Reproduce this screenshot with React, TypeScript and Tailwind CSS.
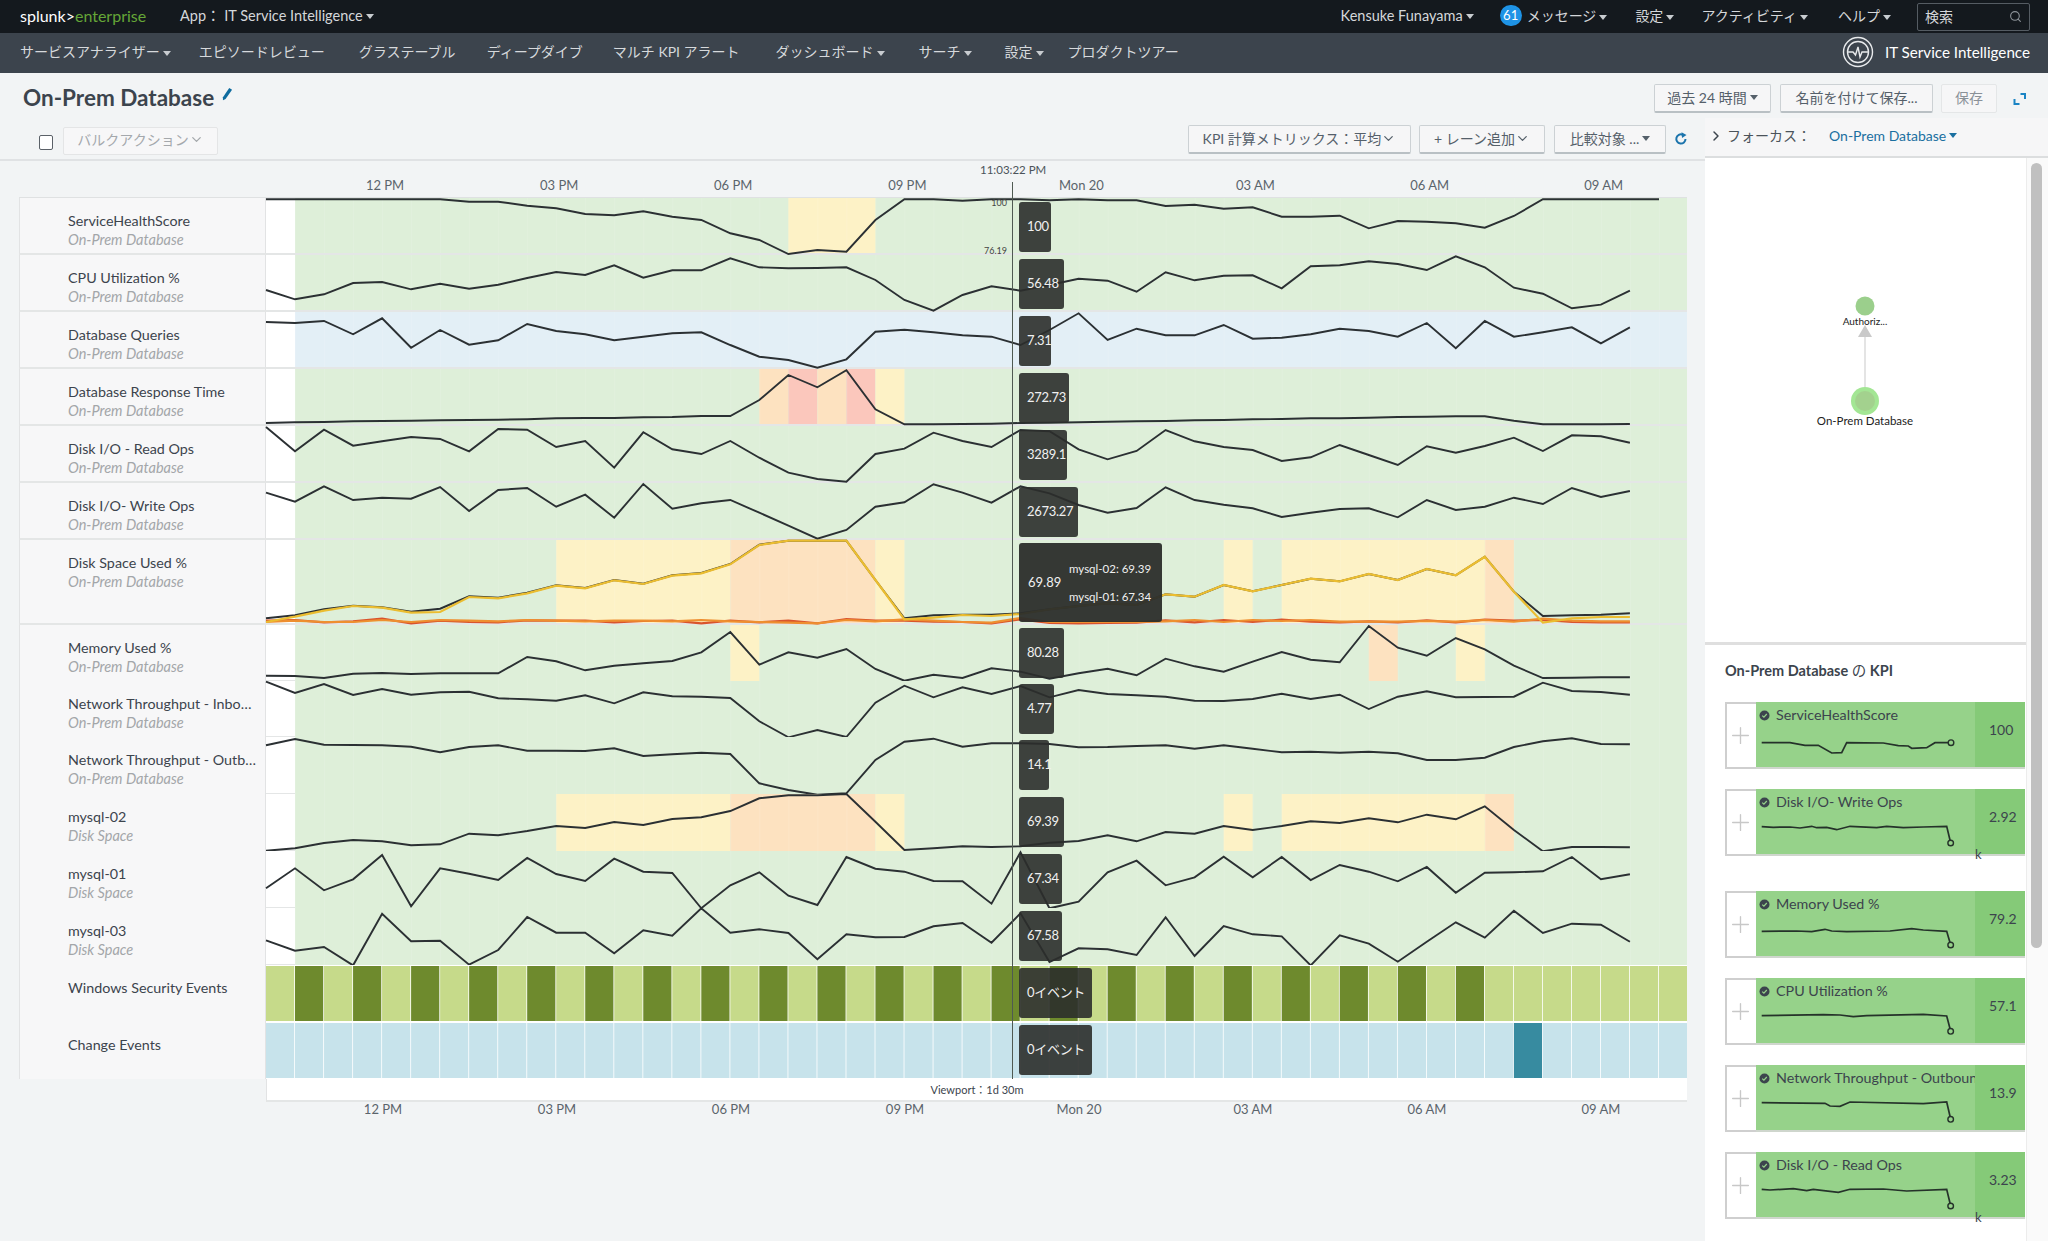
import { ChevronDown, ChevronRight, Plus, Search } from "lucide-react";

const STEP = 29.02;
const GREEN = "#deefd9";
const BLUE = "#e3eff6";
const YEL = "#fdf2c6";
const ORG = "#fde2c0";
const RED = "#fbc7bc";

type Band = [number, number, string];

interface Lane {
  name: string;
  sub: string;
  top: number;
  h: number;
  base: number;
  data: number[];
  bands: Band[];
  tip: string;
  tipW: number;
  bg?: string;
  sep?: boolean;
}

const diskBands: Band[] = [
  [10, 16, YEL],
  [16, 21, ORG],
  [21, 22, YEL],
  [33, 34, YEL],
  [35, 42, YEL],
  [42, 43, ORG],
];

const LANES: Lane[] = [
  {
    name: "ServiceHealthScore", sub: "On-Prem Database", top: 198, h: 57, base: 190, tip: "100", tipW: 32, sep: true,
    bands: [[18, 21, YEL]],
    data: [28, 28, 28, 28, 28, 28, 28, 35, 35, 47, 55, 72, 76, 64, 80, 90, 130, 150, 192, 180, 185, 90, 28, 28, 32, 28, 28, 31, 28, 31, 31, 48, 44, 56, 52, 80, 80, 77, 115, 93, 95, 100, 113, 78, 28, 28, 28, 28, 28],
  },
  {
    name: "CPU Utilization %", sub: "On-Prem Database", top: 255, h: 57, base: 190, tip: "56.48", tipW: 45, sep: true,
    bands: [],
    data: [300, 328, 313, 279, 276, 298, 281, 296, 284, 264, 246, 255, 226, 263, 241, 241, 205, 232, 235, 234, 232, 270, 330, 362, 315, 289, 302, 285, 266, 272, 305, 247, 271, 257, 256, 295, 229, 226, 214, 222, 240, 199, 232, 293, 311, 355, 344, 302],
  },
  {
    name: "Database Queries", sub: "On-Prem Database", top: 312, h: 57, base: 190, tip: "7.31", tipW: 32, bg: BLUE, sep: true,
    bands: [],
    data: [396, 399, 393, 433, 385, 473, 420, 464, 451, 402, 423, 433, 451, 440, 430, 427, 465, 500, 510, 533, 508, 425, 419, 427, 436, 440, 465, 420, 370, 450, 416, 436, 436, 405, 446, 443, 433, 416, 423, 440, 399, 475, 393, 440, 427, 412, 460, 412],
  },
  {
    name: "Database Response Time", sub: "On-Prem Database", top: 369, h: 57, base: 190, tip: "272.73", tipW: 50, sep: true,
    bands: [[17, 18, ORG], [18, 19, RED], [19, 20, ORG], [20, 21, RED], [21, 22, YEL]],
    data: [699, 697, 696, 694, 693, 692, 691, 690, 689, 688, 685, 684, 684, 682, 681, 678, 678, 630, 555, 592, 541, 658, 703, 703, 702, 701, 699, 698, 697, 695, 694, 693, 691, 690, 688, 687, 685, 685, 683, 681, 680, 679, 679, 692, 703, 703, 703, 702],
  },
  {
    name: "Disk I/O - Read Ops", sub: "On-Prem Database", top: 426, h: 57, base: 190, tip: "3289.1", tipW: 48, sep: true,
    bands: [],
    data: [711, 784, 719, 767, 754, 741, 747, 784, 717, 719, 771, 753, 833, 727, 778, 792, 753, 803, 848, 867, 875, 792, 776, 728, 753, 771, 720, 724, 778, 808, 783, 720, 754, 771, 780, 813, 802, 765, 795, 825, 769, 788, 768, 743, 783, 736, 739, 758],
  },
  {
    name: "Disk I/O- Write Ops", sub: "On-Prem Database", top: 483, h: 57, base: 190, tip: "2673.27", tipW: 59, sep: true,
    bands: [],
    data: [908, 935, 889, 930, 923, 926, 891, 963, 900, 894, 950, 914, 983, 882, 956, 940, 930, 968, 1007, 1046, 1020, 950, 937, 883, 908, 938, 889, 910, 945, 968, 954, 892, 930, 944, 955, 981, 968, 957, 955, 982, 930, 960, 950, 923, 942, 894, 921, 903],
  },
  {
    name: "Disk Space Used %", sub: "On-Prem Database", top: 540, h: 85, base: 190, tip: "", tipW: 0, sep: true,
    bands: diskBands,
    data: [1285, 1276, 1258, 1247, 1252, 1265, 1256, 1219, 1223, 1208, 1186, 1194, 1170, 1181, 1156, 1149, 1122, 1064, 1052, 1052, 1052, 1170, 1285, 1276, 1274, 1274, 1270, 1258, 1248, 1240, 1245, 1213, 1220, 1185, 1204, 1185, 1166, 1174, 1152, 1170, 1137, 1156, 1100, 1205, 1278, 1276, 1274, 1270],
  },
  {
    name: "Memory Used %", sub: "On-Prem Database", top: 625, h: 56, base: 620, tip: "80.28", tipW: 45,
    bands: [[16, 17, YEL], [38, 39, ORG], [41, 42, YEL]],
    data: [167, 168, 174, 161, 159, 162, 160, 160, 160, 111, 124, 151, 137, 130, 123, 97, 36, 134, 97, 113, 87, 147, 182, 164, 174, 145, 155, 176, 160, 146, 166, 116, 139, 155, 125, 96, 119, 127, 18, 83, 107, 54, 88, 137, 174, 173, 172, 172],
  },
  {
    name: "Network Throughput - Inbo…", sub: "On-Prem Database", top: 681, h: 56, base: 620, tip: "4.77", tipW: 35,
    bands: [],
    data: [185, 219, 192, 225, 207, 224, 217, 215, 235, 238, 242, 226, 250, 217, 229, 230, 234, 304, 352, 330, 351, 248, 197, 232, 202, 222, 198, 232, 210, 222, 226, 230, 242, 243, 237, 221, 237, 224, 267, 230, 214, 232, 231, 230, 188, 213, 216, 224],
  },
  {
    name: "Network Throughput - Outb…", sub: "On-Prem Database", top: 737, h: 57, base: 620, tip: "14.1", tipW: 30,
    bands: [],
    data: [376, 357, 374, 375, 376, 380, 397, 381, 376, 392, 392, 393, 385, 408, 403, 398, 402, 490, 510, 524, 520, 420, 365, 356, 380, 370, 370, 372, 382, 381, 378, 376, 386, 376, 386, 397, 395, 398, 395, 400, 420, 420, 413, 381, 364, 355, 372, 373],
  },
  {
    name: "mysql-02", sub: "Disk Space", top: 794, h: 57, base: 620, tip: "69.39", tipW: 45,
    bands: diskBands,
    data: [692, 685, 669, 660, 664, 676, 673, 641, 646, 633, 618, 624, 606, 615, 597, 592, 573, 535, 526, 526, 522, 605, 690, 685, 679, 681, 679, 668, 663, 646, 664, 636, 641, 618, 630, 618, 604, 609, 595, 607, 584, 598, 559, 630, 694, 681, 681, 682],
  },
  {
    name: "mysql-01", sub: "Disk Space", top: 851, h: 57, base: 620, tip: "67.34", tipW: 43,
    bands: [],
    data: [805, 745, 811, 778, 705, 859, 745, 761, 780, 714, 762, 783, 716, 755, 759, 865, 796, 757, 827, 855, 711, 746, 755, 783, 784, 851, 697, 865, 845, 757, 722, 796, 772, 710, 772, 711, 780, 735, 755, 784, 741, 818, 758, 757, 754, 711, 778, 763],
  },
  {
    name: "mysql-03", sub: "Disk Space", top: 908, h: 57, base: 620, tip: "67.58", tipW: 43,
    bands: [],
    data: [961, 992, 981, 1036, 881, 964, 962, 1034, 990, 891, 938, 938, 1000, 931, 947, 865, 938, 928, 939, 1018, 943, 952, 951, 919, 909, 968, 880, 1026, 985, 988, 1005, 892, 1008, 918, 943, 949, 1036, 946, 971, 1025, 965, 907, 953, 872, 939, 911, 914, 965],
  },
];

const YELLOW_LINE = [1296, 1280, 1262, 1248, 1253, 1268, 1266, 1221, 1225, 1210, 1187, 1195, 1171, 1182, 1157, 1150, 1123, 1065, 1052, 1052, 1052, 1170, 1288, 1283, 1275, 1278, 1272, 1258, 1248, 1240, 1245, 1213, 1220, 1185, 1204, 1185, 1166, 1174, 1152, 1170, 1137, 1156, 1100, 1205, 1298, 1285, 1281, 1281];
const ORANGE_LINE = [1296, 1292, 1296, 1296, 1290, 1296, 1290, 1292, 1294, 1290, 1292, 1294, 1292, 1292, 1294, 1290, 1294, 1296, 1298, 1300, 1290, 1294, 1288, 1292, 1296, 1298, 1284, 1296, 1296, 1296, 1296, 1294, 1290, 1296, 1290, 1293, 1290, 1295, 1295, 1295, 1293, 1295, 1290, 1295, 1286, 1292, 1294, 1294];
const RED_LINE = [1292, 1290, 1297, 1294, 1286, 1300, 1292, 1296, 1297, 1291, 1292, 1292, 1297, 1293, 1292, 1300, 1292, 1297, 1292, 1300, 1287, 1292, 1292, 1295, 1296, 1300, 1288, 1299, 1300, 1299, 1298, 1291, 1297, 1290, 1296, 1289, 1295, 1297, 1294, 1297, 1291, 1297, 1289, 1292, 1290, 1296, 1297, 1297];

const pts = (data: number[], base: number, top: number) =>
  data.map((v, i) => `${(i * STEP).toFixed(1)},${(base + v / 3 - top).toFixed(1)}`).join(" ");

function LaneChart({ lane }: { lane: Lane }) {
  return (
    <svg width={1421} height={lane.h} className="block overflow-visible shrink-0">
      <rect x={0} y={0} width={29} height={lane.h} fill="#fff" />
      <rect x={29} y={0} width={1392} height={lane.h} fill={lane.bg ?? GREEN} />
      {lane.bands.map(([a, b, c]) => (
        <rect key={a} x={a * STEP} y={0} width={(b - a) * STEP} height={lane.h} fill={c} />
      ))}
      {Array.from({ length: 48 }, (_, i) => (
        <rect key={i} x={(i + 1) * STEP} y={0} width={1} height={lane.h} fill="#fff" opacity={0.12} />
      ))}
      {lane.sep ? (
        <rect x={0} y={lane.h - 2} width={1421} height={2} fill="#e4e6e6" />
      ) : (
        <rect x={0} y={lane.h - 1} width={29} height={1} fill="#e4e6e6" />
      )}
      <polyline points={pts(lane.data, lane.base, lane.top)} fill="none" stroke="#2b3033" strokeWidth={1.9} />
      {lane.name === "Disk Space Used %" && (
        <>
          <polyline points={pts(RED_LINE, 190, 540)} fill="none" stroke="#d9542c" strokeWidth={2.2} />
          <polyline points={pts(ORANGE_LINE, 190, 540)} fill="none" stroke="#ee8f30" strokeWidth={2.2} />
          <polyline points={pts(YELLOW_LINE, 190, 540)} fill="none" stroke="#ebbd30" strokeWidth={2.2} />
        </>
      )}
    </svg>
  );
}

function EventChart({ windows }: { windows?: boolean }) {
  return (
    <svg width={1421} height={57} className="block shrink-0">
      <rect width={1421} height={57} fill="#fff" />
      {Array.from({ length: 49 }, (_, i) => {
        let fill = windows ? "#c6da8a" : "#c7e3eb";
        if (windows && i % 2 === 1 && i < 42) fill = "#6e8a2d";
        if (!windows && i === 43) fill = "#378ba0";
        return <rect key={i} x={i * STEP} y={1} width={28.2} height={55} fill={fill} />;
      })}
    </svg>
  );
}

function Tip({ text, w, top = 4 }: { text: string; w: number; top?: number }) {
  return (
    <div
      className="absolute left-[753px] h-[50px] rounded-[3px] bg-[#2b2d2b]/90 pl-2 flex items-center text-[13px] tracking-[-0.3px] text-[#f0f0f0] whitespace-nowrap"
      style={{ width: w, top }}
    >
      {text}
    </div>
  );
}

function Caret({ color = "#c8ccd0" }: { color?: string }) {
  return (
    <svg width="8" height="5" viewBox="0 0 8 5" className="inline-block ml-[3px] align-middle">
      <polygon points="0,0 8,0 4,5" fill={color} />
    </svg>
  );
}

function Btn({ children, cls }: { children: React.ReactNode; cls: string }) {
  return (
    <div className={`h-[29px] pb-[2px] flex items-center justify-center rounded-[2px] border border-[#ccd1d4] border-b-2 border-b-[#b9c0c4] bg-[#f6f6f7] text-[14px] text-[#55606a] whitespace-nowrap ${cls}`}>
      {children}
    </div>
  );
}

function Label({ name, sub, h, sep }: { name: string; sub?: string; h: number; sep?: boolean }) {
  return (
    <div
      className={`w-[247px] shrink-0 pl-[48px] pt-[14px] bg-[#f7f7f8] border-l border-r border-[#e2e3e4] ${sep ? "border-b-2 border-b-[#e4e6e6]" : ""}`}
      style={{ height: h }}
    >
      <div className="text-[14.3px] leading-[18px] text-[#3c444d] whitespace-nowrap">{name}</div>
      {sub && <div className="mt-[1px] text-[14.5px] leading-[18px] italic text-[#a3a6a9] whitespace-nowrap">{sub}</div>}
    </div>
  );
}

const TOP_TICKS = ["12 PM", "03 PM", "06 PM", "09 PM", "Mon 20", "03 AM", "06 AM", "09 AM"];

interface Kpi {
  name: string;
  value: string;
  k?: boolean;
  top: number;
  spark: [number, number][];
}

const KPIS: Kpi[] = [
  {
    name: "ServiceHealthScore", value: "100", top: 188,
    spark: [[215, 310], [300, 310], [345, 318], [385, 318], [425, 341], [455, 340], [470, 310], [580, 311], [625, 319], [655, 320], [665, 327], [710, 325], [735, 310], [783, 310]],
  },
  {
    name: "Disk I/O- Write Ops", value: "2.92", k: true, top: 450,
    spark: [[215, 563], [250, 565], [300, 564], [330, 567], [365, 562], [380, 566], [410, 565], [440, 572], [480, 562], [560, 566], [590, 562], [640, 566], [700, 564], [770, 562], [782, 612]],
  },
  {
    name: "Memory Used %", value: "79.2", top: 757,
    spark: [[215, 878], [320, 877], [365, 879], [405, 872], [425, 877], [470, 879], [600, 877], [665, 870], [700, 874], [770, 878], [782, 919]],
  },
  {
    name: "CPU Utilization %", value: "57.1", top: 120,
    spark: [[215, 233], [400, 230], [450, 231], [490, 236], [530, 233], [700, 229], [770, 234], [782, 280]],
  },
  {
    name: "Network Throughput - Outbound", value: "13.9", top: 381,
    spark: [[215, 494], [405, 496], [420, 504], [450, 505], [480, 492], [700, 497], [770, 492], [782, 544]],
  },
  {
    name: "Disk I/O - Read Ops", value: "3.23", k: true, top: 643,
    spark: [[215, 755], [240, 757], [310, 753], [350, 759], [370, 755], [445, 764], [480, 755], [580, 754], [650, 760], [770, 755], [782, 805]],
  },
];

function KpiCard({ kpi }: { kpi: Kpi }) {
  const line = kpi.spark.map(([x, y]) => `${((x - 198) / 3).toFixed(1)},${((y - kpi.top) / 3 - 23).toFixed(1)}`).join(" ");
  const [lx, ly] = kpi.spark[kpi.spark.length - 1];
  return (
    <div className={`flex h-[67px] w-[300px] ${kpi.k ? "mb-[35px]" : "mb-[20px]"}`}>
      <div className="w-[31px] shrink-0 bg-white border-2 border-r-0 border-[#cfcfcf] flex items-center justify-center pr-[2px]">
        <Plus size={27} strokeWidth={1.2} color="#c8c8c8" />
      </div>
      <div className="w-[219px] shrink-0 bg-[#96d28a] border-b-2 border-[#cfd6cd] pt-[3px] overflow-hidden">
        <div className="h-[20px] flex items-center pl-[3px] text-[14.3px] text-[#3c444d] whitespace-nowrap">
          <svg width="11" height="11" viewBox="0 0 11 11" className="mr-[6px] shrink-0">
            <circle cx="5.5" cy="5.5" r="5" fill="#3c444d" />
            <polyline points="3.2,5.6 4.9,7.2 7.8,4" fill="none" stroke="#96d28a" strokeWidth="1.2" />
          </svg>
          {kpi.name}
        </div>
        <svg width={219} height={40} className="block overflow-visible">
          <polyline points={line} fill="none" stroke="#25322a" strokeWidth={1.7} />
          <circle cx={(lx - 198) / 3} cy={(ly - kpi.top) / 3 - 23} r={2.8} fill="#96d28a" stroke="#25322a" strokeWidth={1.4} />
        </svg>
      </div>
      <div className="relative w-[50px] shrink-0 bg-[#85ca78] border-b-2 border-[#cfd6cd] pl-[14px] pt-[19px] text-[14px] leading-[18px] text-[#3c444d]">
        {kpi.value}
        {kpi.k && <span className="absolute left-0 top-[57px] text-[13px] leading-[16px]">k</span>}
      </div>
    </div>
  );
}

export default function App() {
  const navItems: [string, boolean, string][] = [
    ["サービスアナライザー", true, "mr-[28px]"],
    ["エピソードレビュー", false, "mr-[34px]"],
    ["グラステーブル", false, "mr-[31px]"],
    ["ディープダイブ", false, "mr-[30px]"],
    ["マルチ KPI アラート", false, "mr-[36px]"],
    ["ダッシュボード", true, "mr-[34px]"],
    ["サーチ", true, "mr-[33px]"],
    ["設定", true, "mr-[24px]"],
    ["プロダクトツアー", false, ""],
  ];

  return (
    <div className="relative w-[2048px] h-[1241px] overflow-hidden bg-[#f2f4f5] [font-family:Lato,'Noto_Sans_CJK_JP',sans-serif] text-[#3c444d]">
      {/* top bar */}
      <div className="h-[33px] bg-[#14191e] flex items-center pl-[20px] pr-[18px] text-[14.5px] text-[#d4d7da]">
        <div className="w-[160px] text-[16px] whitespace-nowrap pb-[2px]">
          <span className="text-white">splunk&gt;</span>
          <span className="text-[#65a637]">enterprise</span>
        </div>
        <div className="whitespace-nowrap pb-[2px]">
          App：&nbsp;IT Service Intelligence
          <Caret />
        </div>
        <div className="ml-auto flex items-center whitespace-nowrap">
          <span className="mr-[26px] pb-[2px]">
            Kensuke Funayama
            <Caret />
          </span>
          <span className="w-[22px] h-[21px] rounded-full bg-[#1e93e6] text-white text-[13px] flex items-center justify-center mr-[5px] mb-[2px]">61</span>
          <span className="mr-[28px] pb-[2px] text-[14px]">
            メッセージ
            <Caret />
          </span>
          <span className="mr-[27px] pb-[2px] text-[14px]">
            設定
            <Caret />
          </span>
          <span className="mr-[30px] pb-[2px] text-[14px]">
            アクティビティ
            <Caret />
          </span>
          <span className="mr-[26px] pb-[2px] text-[14px]">
            ヘルプ
            <Caret />
          </span>
          <div className="w-[113px] h-[28px] border border-[#555c63] rounded-[2px] flex items-center justify-between px-[7px] text-[14px]">
            <span>検索</span>
            <Search size={13} color="#8d9399" />
          </div>
        </div>
      </div>

      {/* app nav */}
      <div className="h-[40px] bg-[#3c444d] flex items-center pl-[20px] pr-[18px] text-[14px] text-[#d6d9dc]">
        <div className="flex items-center pb-[3px]">
          {navItems.map(([t, c, m]) => (
            <span key={t} className={`whitespace-nowrap ${m}`}>
              {t}
              {c && <Caret />}
            </span>
          ))}
        </div>
        <div className="ml-auto flex items-center gap-[11px] pb-[2px] text-white text-[15.2px]">
          <svg width="32" height="32" viewBox="0 0 32 32">
            <circle cx="16" cy="16" r="14.5" fill="none" stroke="#e8eaec" strokeWidth="1.4" />
            <circle cx="16" cy="16" r="10.5" fill="none" stroke="#e8eaec" strokeWidth="1.4" />
            <polyline points="6,16 11,16 13.5,19 16,11 18,21 20,16 26,16" fill="none" stroke="#e8eaec" strokeWidth="1.4" />
          </svg>
          IT Service Intelligence
        </div>
      </div>

      {/* title row */}
      <div className="h-[45px] flex items-start pl-[23px] pr-[21px] pt-[11px]">
        <div className="text-[22.5px] leading-[28px] font-bold text-[#3c444d] whitespace-nowrap">On-Prem Database</div>
        <svg width="11" height="14" viewBox="0 0 12 16" className="ml-[8px] mt-[3px]">
          <path d="M8 1 L11.2 3 L3.8 13.8 L0.8 15 L0.8 11.8 Z" fill="#0f6c9f" />
        </svg>
        <div className="ml-auto flex items-center">
          <Btn cls="w-[117px]">
            過去 24 時間
            <Caret color="#55606a" />
          </Btn>
          <Btn cls="w-[153px] ml-[9px]">名前を付けて保存...</Btn>
          <div className="w-[56px] h-[29px] pb-[2px] ml-[8px] flex items-center justify-center rounded-[2px] border border-[#e4e6e7] bg-[#f6f6f7] text-[14px] text-[#8a9198]">保存</div>
          <svg width="14" height="14" viewBox="0 0 14 14" className="ml-[16px]">
            <path d="M7.5 2 H12 V7 M1.5 7 V12 H6.5" fill="none" stroke="#1b84c4" strokeWidth="2" />
          </svg>
        </div>
      </div>

      <div className="flex">
        {/* left column */}
        <div className="w-[1705px] shrink-0">
          <div className="h-[43px] border-b-2 border-[#e0e2e4] flex items-start relative">
            <div className="ml-[39px] mt-[17px] w-[14px] h-[15px] border-[1.5px] border-[#5b6168] rounded-[2px] bg-white" />
            <div className="ml-[10px] mt-[9px] w-[155px] h-[28px] pb-[3px] flex items-center justify-center bg-[#f7f7f8] border border-[#e4e5e6] rounded-[2px] text-[14px] text-[#a4a8ac]">
              バルクアクション
              <ChevronDown size={15} />
            </div>
            <div className="ml-auto mr-[39px] mt-[7px] flex items-center">
              <Btn cls="w-[223px]">
                KPI 計算メトリックス：平均
                <ChevronDown size={15} />
              </Btn>
              <Btn cls="w-[126px] ml-[8px]">
                + レーン追加
                <ChevronDown size={15} />
              </Btn>
              <Btn cls="w-[112px] ml-[9px]">
                比較対象 ...
                <Caret color="#55606a" />
              </Btn>
            </div>
            <svg width="14" height="14" viewBox="0 0 14 14" className="absolute left-[1674px] top-[14px]">
              <path d="M11.5 7 A4.6 4.6 0 1 1 8.6 2.7" fill="none" stroke="#1b74ac" strokeWidth="2" />
              <polygon points="7.5,0.3 12.5,3 8,6" fill="#1b74ac" />
            </svg>
          </div>

          {/* top axis */}
          <div className="relative h-[36px] pl-[298px] pt-[15px] flex text-[13px] leading-[18px] text-[#5b646c]">
            {TOP_TICKS.map((t) => (
              <div key={t} className="w-[174.1px] shrink-0 text-center whitespace-nowrap">{t}</div>
            ))}
            <div className="absolute left-[980px] top-[1px] text-[11.5px] leading-[16px] text-[#4b535a] whitespace-nowrap">11:03:22 PM</div>
          </div>

          {/* lanes */}
          <div className="relative ml-[19px] w-[1668px] border-t border-[#dfe1e2]">
            {LANES.map((lane) => (
              <div key={lane.name} className="flex">
                <Label name={lane.name} sub={lane.sub} h={lane.h} sep={lane.sep} />
                <div className="relative">
                  <LaneChart lane={lane} />
                  {lane.tip && <Tip text={lane.tip} w={lane.tipW} top={lane.sep ? 4 : 3} />}
                </div>
              </div>
            ))}
            <div className="flex">
              <Label name="Windows Security Events" h={57} />
              <div className="relative">
                <EventChart windows />
                <Tip text="0イベント" w={73} top={3} />
              </div>
            </div>
            <div className="flex">
              <Label name="Change Events" h={57} />
              <div className="relative">
                <EventChart />
                <Tip text="0イベント" w={73} top={3} />
              </div>
            </div>

            {/* disk space tooltip sits taller than the others */}
            <div className="absolute left-[1000px] top-[345px] w-[143px] h-[79px] rounded-[3px] bg-[#2b2d2b]/95 pl-[9px] flex items-center text-[13px] text-[#f0f0f0]">
              <span className="w-[41px] shrink-0">69.89</span>
              <div className="flex flex-col gap-[15px] text-[11.5px] leading-[13px] whitespace-nowrap">
                <span>mysql-02: 69.39</span>
                <span>mysql-01: 67.34</span>
              </div>
            </div>

            {/* y scale of the first lane and the time cursor */}
            <span className="absolute left-[967px] top-[0px] text-[9px] leading-[10px] text-[#444] w-[21px] text-right">100</span>
            <span className="absolute left-[963px] top-[48px] text-[9px] leading-[10px] text-[#444] w-[25px] text-right">76.19</span>
            <div className="absolute left-[993px] -top-[16px] bottom-0 w-px bg-[#4f5a52]" />
          </div>

          <div className="ml-[266px] w-[1421px] h-[23px] pt-[1px] bg-white border-l border-[#e2e3e4] border-b-2 border-b-[#e4e6e6] flex items-center justify-center text-[11px] text-[#3c444d] whitespace-nowrap">
            Viewport：1d 30m
          </div>
          <div className="pl-[296px] -mt-[2px] flex text-[13px] leading-[18px] text-[#5b646c]">
            {TOP_TICKS.map((t) => (
              <div key={t} className="w-[174px] shrink-0 text-center whitespace-nowrap">{t}</div>
            ))}
          </div>
        </div>

        {/* right pane */}
        <div className="w-[343px] shrink-0">
          <div className="h-[40px] bg-[#f6f6f7] border-b-2 border-[#dcdedf] flex items-center pl-[3px] pb-[3px] whitespace-nowrap">
            <ChevronRight size={16} color="#3c444d" strokeWidth={2.2} />
            <span className="ml-[3px] text-[14px] text-[#4b535a] w-[102px]">フォーカス：</span>
            <span className="text-[14px] text-[#1a6fa0]">On-Prem Database</span>
            <Caret color="#1a6fa0" />
          </div>
          <div className="flex">
            <div className="w-[321px] bg-white shrink-0 h-[1083px] overflow-hidden">
              <svg width={321} height={487} className="block border-b-[3px] border-[#dfdfdf]">
                <line x1={160} y1={179} x2={160} y2={229} stroke="#c9c9c9" strokeWidth={1} />
                <polygon points="160,167 153,179 167,179" fill="#c9c9c9" />
                <circle cx={160} cy={148} r={9.5} fill="#9bcf8c" />
                <circle cx={160} cy={243} r={14} fill="#a3e694" />
                <circle cx={160} cy={243} r={10} fill="#a3d18e" />
                <text x={160} y={167} textAnchor="middle" fontSize={10} fill="#222">Authoriz...</text>
                <text x={160} y={267} textAnchor="middle" fontSize={11.5} fill="#222">On-Prem Database</text>
              </svg>
              <div className="pl-[20px] pt-[16px]">
                <div className="h-[20px] text-[14.5px] leading-[20px] font-bold text-[#3c444d] mb-[21px] whitespace-nowrap">
                  On-Prem Database <span className="font-normal">の</span> KPI
                </div>
                {KPIS.map((k) => (
                  <KpiCard key={k.name} kpi={k} />
                ))}
              </div>
            </div>
            <div className="w-[22px] bg-[#fafafa] border-l border-[#ececec] h-[1083px] pl-[4px] pt-[5px]">
              <div className="w-[11px] h-[785px] rounded-full bg-[#c0c0c0]" />
            </div>
          </div>
        </div>
      </div>
    </div>
  );
}
